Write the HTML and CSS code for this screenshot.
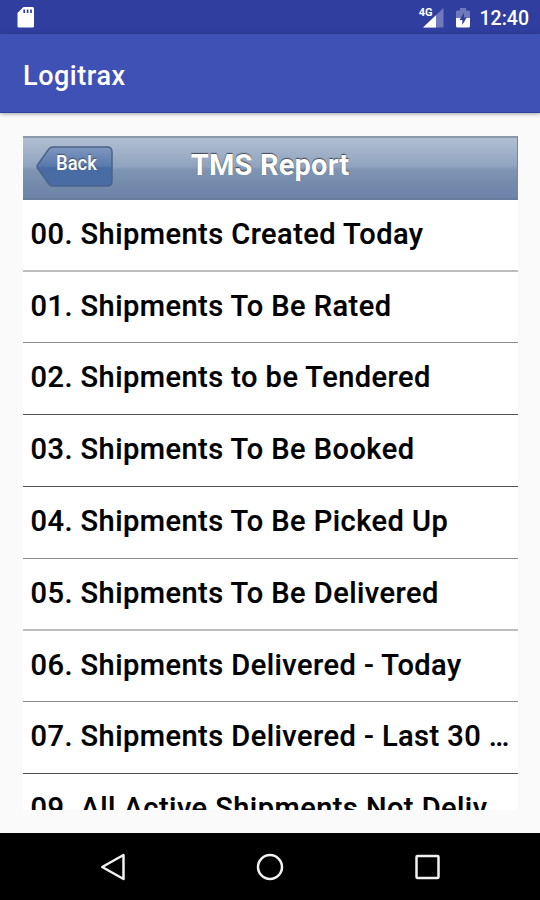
FILE: index.html
```
<!DOCTYPE html>
<html lang="en">
<head>
    <meta charset="UTF-8">
    <meta name="viewport" content="width=device-width, initial-scale=1.0">
    <title>Logitrax</title>
    <link rel="stylesheet" href="styles.css">
</head>
<body>
    <div class="status-bar">
        <svg class="sd-icon" width="18" height="22" viewBox="0 0 18 22">
            <path d="M6.5 0H15.5Q17 0 17 1.5V19Q17 20.500 15.500 20.500H2Q.5 20.500 .5 19V6Z" fill="#fff"/>
            <path d="M7.200 2.500V6M10.600 2.500V6M14 2.500V6" stroke="#303f9f" stroke-width="1.700"/>
        </svg>
        <div class="status-right">
            <span class="network">4G</span>
            <svg class="signal-icon" width="21" height="20" viewBox="0 0 21 20">
                <path d="M20.500 0V19.500H0Z" fill="#6f79bb"/>
                <path d="M13 7.200V19.500H0Z" fill="#fff"/>
            </svg>
            <svg class="battery-icon" width="14" height="20" viewBox="0 0 14 20">
                <path d="M0 4Q0 2.500 1.500 2.500H4V0H10V2.500H12.500Q14 2.500 14 4V11H0Z" fill="#6f79bb"/>
                <path d="M0 10H14V18Q14 19.500 12.500 19.500H1.500Q0 19.500 0 18Z" fill="#fff"/>
                <path d="M8 4.500L3.500 12H6.300V17L10.700 9.600H8Z" fill="#303f9f"/>
            </svg>
            <span class="clock">12:40</span>
        </div>
    </div>

    <header class="app-bar">Logitrax</header>

    <main class="content">
        <div class="report">
            <div class="report-header">
                <a href="#" class="back">
                    <svg class="back-shape" width="77" height="41" viewBox="0 0 78 41" preserveAspectRatio="none">
                        <defs>
                            <linearGradient id="back-fill" x1="0" y1="0" x2="0" y2="1">
                                <stop offset="0" stop-color="#7f97bd"/>
                                <stop offset=".5" stop-color="#5878ad"/>
                                <stop offset=".53" stop-color="#486ba5"/>
                                <stop offset="1" stop-color="#4a6ca4"/>
                            </linearGradient>
                        </defs>
                        <path d="M17 1H72Q77 1 77 6V35Q77 40 72 40H17Q14.500 40 13 38L1.500 22Q.6 20.500 1.500 19L13 3Q14.500 1 17 1Z" fill="url(#back-fill)" stroke="#4b6388" stroke-width="1.500"/>
                    </svg>
                    <span class="back-label">Back</span>
                </a>
                <h1 class="report-title">TMS Report</h1>
            </div>
            <ul class="report-list">
                <li class="row line-light">00. Shipments Created Today</li>
                <li class="row line-mid short">01. Shipments To Be Rated</li>
                <li class="row line-dark">02. Shipments to be Tendered</li>
                <li class="row line-dark">03. Shipments To Be Booked</li>
                <li class="row line-mid">04. Shipments To Be Picked Up</li>
                <li class="row line-light">05. Shipments To Be Delivered</li>
                <li class="row line-mid short">06. Shipments Delivered - Today</li>
                <li class="row line-dark">07. Shipments Delivered - Last 30 …</li>
                <li class="row">09. All Active Shipments Not Deliv…</li>
            </ul>
        </div>
    </main>

    <nav class="nav-bar">
        <svg width="28" height="28" viewBox="0 0 28 28">
            <path d="M24.500 2V26L3.200 14Z"/>
        </svg>
        <svg width="28" height="28" viewBox="0 0 28 28">
            <circle cx="14" cy="14" r="12"/>
        </svg>
        <svg width="28" height="28" viewBox="0 0 28 28">
            <rect x="3.500" y="3" width="22" height="22" rx="1"/>
        </svg>
    </nav>
</body>
</html>
```

FILE: styles.css
```
* {
    margin: 0;
    padding: 0;
    box-sizing: border-box;
}

body {
    height: 900px;
    display: flex;
    flex-direction: column;
    overflow: hidden;
    background: #fafafa;
    font-family: Roboto, "Liberation Sans", sans-serif;
    color: #000;
}

/* Status bar */
.status-bar {
    height: 34px;
    flex: none;
    display: flex;
    justify-content: space-between;
    align-items: flex-start;
    padding: 7px 11px 0 17px;
    background: #303f9f;
    color: #fff;
}

.status-right {
    display: flex;
    align-items: flex-start;
}

.network {
    font-size: 11px;
    font-weight: 700;
    line-height: 11px;
    margin-right: -10px;
    z-index: 1;
}

.signal-icon {
    margin-top: 1px;
}

.battery-icon {
    margin: 1px 10px 0 12px;
}

.clock {
    font-size: 19.5px;
    font-weight: 500;
    line-height: 23px;
}

/* App bar */
.app-bar {
    height: 79px;
    flex: none;
    padding-left: 23px;
    background: #3f51b5;
    border-bottom: 1px solid #2a41a8;
    box-shadow: 0 1px 4px rgba(0, 0, 0, 0.35);
    color: #fff;
    font-size: 27px;
    font-weight: 500;
    letter-spacing: 0.55px;
    line-height: 84px;
}

/* Content */
.content {
    height: 720px;
    flex: none;
    padding: 23px 22px 23px 23px;
}

.report {
    height: 674px;
    overflow: hidden;
    background: #fff;
}

.report-header {
    position: relative;
    height: 64px;
    border: 1px solid #7589a0;
    border-top: 2px solid #8998ab;
    border-bottom: 2px solid #647e9b;
    border-left: 0;
    background: linear-gradient(#b1bfd1, #8fa3bf 48%, #7f95b3 52%, #6c82a7);
}

.back {
    position: absolute;
    left: 13px;
    top: 8px;
    width: 78px;
    height: 41px;
    color: #fff;
    text-decoration: none;
}

.back-shape {
    display: block;
}

.back-label {
    position: absolute;
    left: 20px;
    top: 5px;
    font-size: 20.5px;
    font-weight: 500;
    line-height: 24px;
    text-shadow: 0 -1px 1px rgba(0, 0, 0, 0.4);
    transform: scaleX(0.9);
    transform-origin: left;
}

.report-title {
    text-align: center;
    color: #fff;
    font-size: 29px;
    font-weight: 700;
    letter-spacing: 0.2px;
    line-height: 54px;
    text-shadow: 0 -1px 1px rgba(0, 0, 0, 0.6);
}

.report-list {
    list-style: none;
}

.row {
    height: 72px;
    padding: 0 0 0 7.5px;
    border-bottom: 1px solid #777;
    font-size: 29px;
    font-weight: 500;
    letter-spacing: 0.46px;
    line-height: 68px;
    white-space: nowrap;
    -webkit-text-stroke: 0.2px #000;
}

.short {
    height: 71px;
}

/* Divider shades */
.line-light {
    border-bottom: 2px solid #bebebe;
}

.line-mid {
    border-bottom-color: #8c8c8c;
}

.line-dark {
    border-bottom-color: #505050;
}

/* Navigation bar */
.nav-bar {
    height: 67px;
    flex: none;
    display: flex;
    justify-content: center;
    align-items: center;
    gap: 129px;
    background: #000;
}

.nav-bar svg {
    fill: none;
    stroke: #f2f2f2;
    stroke-width: 2.5;
    stroke-linejoin: round;
}
```
